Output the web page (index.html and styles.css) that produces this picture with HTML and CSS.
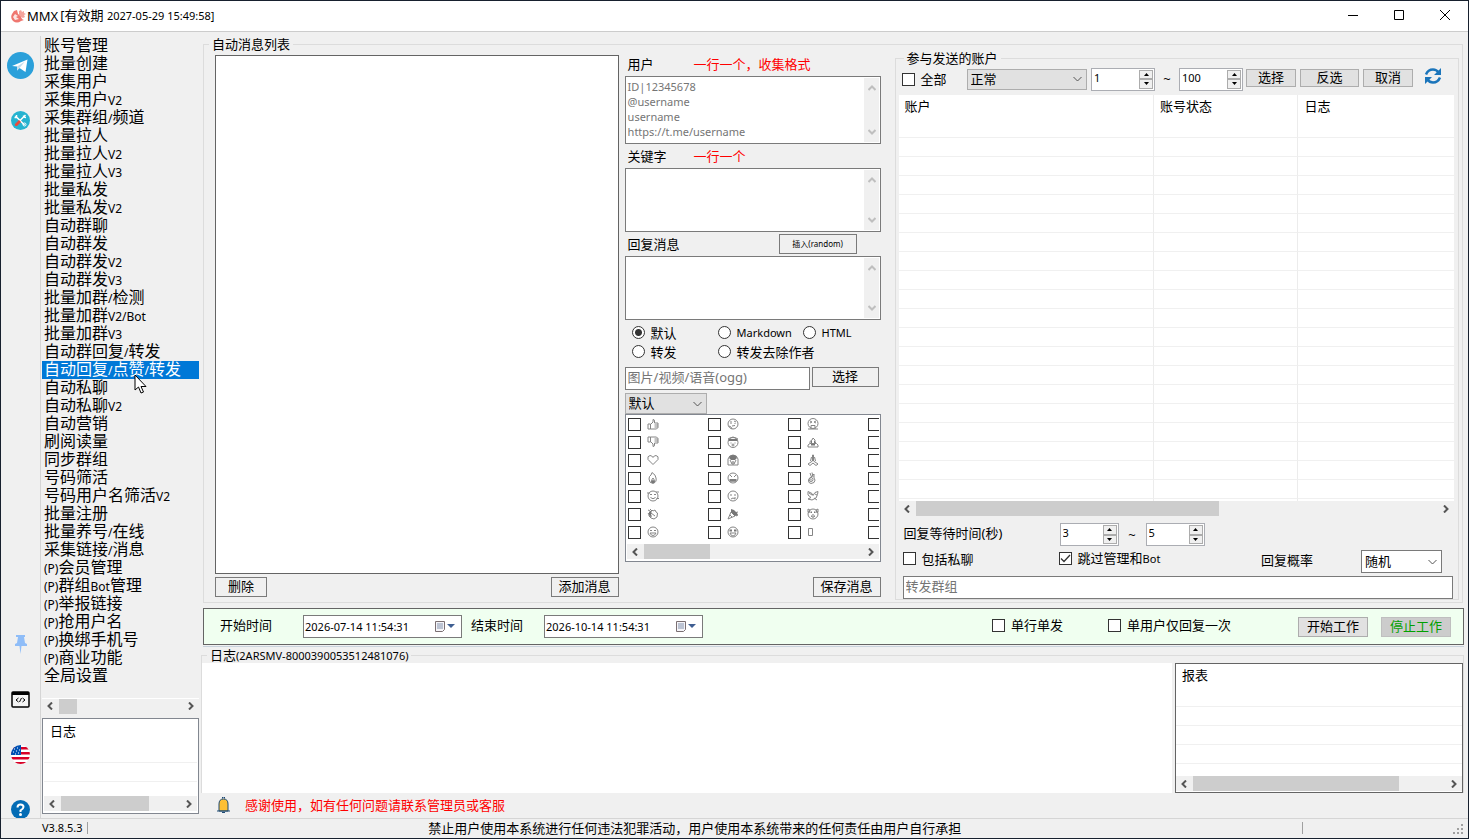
FILE: index.html
```html
<!DOCTYPE html>
<html lang="zh-CN">
<head>
    <meta charset="UTF-8">
    <meta name="viewport" content="width=device-width, initial-scale=1.0">
    <title>MMX</title>
    <link rel="stylesheet" href="styles.css">
</head>
<body>
    <svg class="sprite" aria-hidden="true">
        <symbol id="left" viewBox="0 0 8 8"><path d="M6 .5L2.500 4L6 7.500"/></symbol>
        <symbol id="right" viewBox="0 0 8 8"><path d="M2 .5L5.500 4L2 7.500"/></symbol>
        <symbol id="up" viewBox="0 0 8 8"><path d="M.5 6L4 2.500L7.500 6"/></symbol>
        <symbol id="down" viewBox="0 0 8 8"><path d="M.5 2L4 5.500L7.500 2"/></symbol>
        <symbol id="calendar" viewBox="0 0 21 13">
            <path d="M1.500 1.500h9v8l-2 2h-7z" fill="#f4f4f8" stroke="#7a6f72"/>
            <path d="M3 4h6M3 6h6M3 8h6M4 3v6M6 3v6M8 3v6" stroke="#a9b3c6" fill="none"/>
            <path d="M13 4h8l-4 4z" fill="#3f5f92"/>
        </symbol>
        <symbol id="like" viewBox="0 0 12 12"><path d="M1 6h2.500v5H1zM3.500 6.500L6 4V1.500q1.500 0 1.500 1.500v2H11v4.500L9.500 11h-6M7.500 7H11M7.500 9H11"/></symbol>
        <symbol id="dislike" viewBox="0 0 12 12"><path d="M1 6h2.500V1H1zM3.500 5.500L6 8v2.500q1.500 0 1.500-1.500V7H11V2.500L9.500 1h-6M7.500 5H11M7.500 3H11"/></symbol>
        <symbol id="heart" viewBox="0 0 12 12"><path d="M6 10.500L1 5.500Q0 2 3 1.500Q5 1.500 6 3.500Q7 1.500 9 1.500Q12 2 11 5.500z"/></symbol>
        <symbol id="fire" viewBox="0 0 12 12"><path d="M5 .5Q9 3 9 6Q10 10 6 11.500Q2 11 2 7Q2 4 4 3zM6 6Q4 8 4.500 10.500h3Q8 8 6 6z"/><circle cx="6" cy="9.500" r="1.500" class="dark"/></symbol>
        <symbol id="love" viewBox="0 0 12 12"><circle cx="6" cy="6" r="5"/><path d="M0 3h3M9 2h3M3 5l1-1 1 1M7 5l1-1 1 1M3.500 7.500Q6 10 8.500 7.500M9.500 8.500h2.500"/></symbol>
        <symbol id="clap" viewBox="0 0 12 12"><path d="M2 5L5 2l1 1 2-1 1 2 1.500 1-.5 4-3 2-3-1L2 8zM4 5l4 3M1 2l2 1M3 1l1 1M1 5L4 9"/><path d="M2 4l3-2-1 4 1 3-3-2z" class="dark"/></symbol>
        <symbol id="grin" viewBox="0 0 12 12"><circle cx="6" cy="6" r="5"/><path d="M3 5l1-1 1 1M7 5l1-1 1 1M3 7h6Q8 9.500 6 9.500Q4 9.500 3 7z"/></symbol>
        <symbol id="think" viewBox="0 0 12 12"><circle cx="6" cy="6" r="5"/><path d="M3 4h2M7 3l2 1M4 5v1M8 5v1M5 8l3-.5M2 8l2 1 1 2"/></symbol>
        <symbol id="blown" viewBox="0 0 12 12"><circle cx="6" cy="6.500" r="5"/><path d="M1 3l2-1 3-1 3 1 2 1M4 6.500v1M8 6.500v1"/><path d="M1.500 3h9v2h-9z" class="dark"/><circle cx="6" cy="9" r="1"/></symbol>
        <symbol id="scream" viewBox="0 0 12 12"><path d="M1 11V5Q2 1 6 1Q10 1 11 5v6zM3 6l2 4M9 6l-2 4"/><path d="M2 4Q3 1 6 1Q9 1 10 4L8 6H4z" class="dark"/><ellipse cx="6" cy="9" rx="1" ry="1.500"/></symbol>
        <symbol id="curse" viewBox="0 0 12 12"><circle cx="6" cy="6" r="5"/><path d="M3 3l2 2M9 3L7 5"/><path d="M2.500 7h7v2.500h-7z" class="dark"/><path d="M4 7v3M6 7v3M8 7v3"/></symbol>
        <symbol id="cry" viewBox="0 0 12 12"><circle cx="6" cy="6" r="5"/><path d="M4 4v2M8 4v2M4 9q2-2 4 0M8 7v2"/></symbol>
        <symbol id="party" viewBox="0 0 12 12"><path d="M1 11l3-7 4 4zM3 7l2 2M7 5l4-1M9 8l2-1"/><path d="M4 1l3 1 3 3 1 2-3 1-4-4z" class="dark"/></symbol>
        <symbol id="star" viewBox="0 0 12 12"><circle cx="6" cy="6" r="5"/><path d="M3 7h6Q8 10 6 10Q4 10 3 7z"/><path d="M2.500 3.500h2.500v2H2.500zM7 3.500h2.500v2H7z" class="dark"/></symbol>
        <symbol id="vomit" viewBox="0 0 12 12"><circle cx="6" cy="5.500" r="5"/><path d="M3 3l2 1-2 1M9 3L7 4l2 1M4 11V7.500h4V11M1 11h10"/></symbol>
        <symbol id="poo" viewBox="0 0 12 12"><path d="M1 11V9l2-1.500V5.500L5 4l1-2 2 2v2l1.500 1.500L11 9v2zM3 7.500h6"/><path d="M4 5h1v2H4zM7 5h1v2H7zM4 8h4v1.500H4z" class="dark"/></symbol>
        <symbol id="pray" viewBox="0 0 12 12"><path d="M5.500 1v6L1 10l2 1.500L6 9l3 2.500L11 10 6.500 7V1zM4.500 3L3.500 7M7.500 3l1 4"/></symbol>
        <symbol id="ok" viewBox="0 0 12 12"><path d="M3 1l1.500 4M5 .5L6 5M7 2v4q2 2 0 4.500L4 11.500Q1 11 1.500 8z"/><circle cx="4" cy="7.500" r="2"/><path d="M3.500 7h1v1.500h-1z" class="dark"/></symbol>
        <symbol id="dove" viewBox="0 0 12 12"><path d="M1 1.500l4 2 1 2 2-3 3-1-.5 3L9 8l-4 2-4-1 3-1.500L1 5zM2 3l3 2M8 4l2 1M7 8l3 2"/></symbol>
        <symbol id="clown" viewBox="0 0 12 12"><circle cx="6" cy="6" r="5"/><path d="M1 1l2 1-1 3-1-1zM11 1L9 2l1 3 1-1zM4 8q2 3 4 0z"/><path d="M3.500 3.500h1.500v1.500H3.500zM7 3.500h1.500v1.500H7zM5.500 6h1v1h-1z" class="dark"/></symbol>
        <symbol id="tofu" viewBox="0 0 12 12"><path d="M1.500 2.500h4v7h-4z"/></symbol>
    </svg>

    <div class="window">
        <header class="titlebar">
            <svg class="logo" viewBox="0 0 16 14">
                <path d="M2 5Q0 9 3 12Q7 15 11 12L14 11Q11 10 11 7L8 5 7 1 4 2z" fill="#ef7770"/>
                <path d="M9 2l2-1 1 2 2-1v2l2 1-2 1 1 2-2 1-2-1-2-2z" fill="#f3a49c"/>
                <path d="M5 5l3 2-2 1 3 2-4 1-2-3z" fill="#fbe6e3"/>
            </svg>
            <h1 class="title">MMX</h1>
            <span class="expiry">[有效期 <small>2027-05-29 15:49:58]</small></span>
            <div class="window-buttons">
                <button aria-label="最小化"><svg viewBox="0 0 12 12"><path d="M1 6.500h10"/></svg></button>
                <button aria-label="最大化"><svg viewBox="0 0 12 12"><path d="M1.500 1.500h9v9h-9z"/></svg></button>
                <button aria-label="关闭"><svg viewBox="0 0 12 12"><path d="M1 1l10 10M11 1L1 11"/></svg></button>
            </div>
        </header>

        <div class="main">
            <nav class="rail">
                <a href="#" aria-label="Telegram"><svg class="icon-large" viewBox="0 0 27 27">
                    <circle cx="13.500" cy="13.500" r="13.500" fill="#2ba0da"/>
                    <path d="M5 14L20.500 7.500l-2 12.500-6-4-2.500 2.500v-4z" fill="#fff"/>
                    <path d="M10 14.500l8-5-5.500 6.500-2.500 2.500z" fill="#c3dcec"/>
                </svg></a>
                <a class="rail-tools" href="#" aria-label="工具"><svg class="icon" viewBox="0 0 19 19">
                    <circle cx="9.500" cy="9.500" r="9.500" fill="#26b3d0"/>
                    <path d="M4.500 5l9 9M5.500 4v2.500H3.500" stroke="#fff" fill="none" stroke-width="1.500"/>
                    <path d="M14.500 4L9 9.500M12.500 4.500q0 2 2.500 2" stroke="#fff" fill="none" stroke-width="1.500"/>
                    <path d="M4 13l4-4 2 2-4 4q-3 0-2-2z" fill="#e94b3c"/>
                    <circle cx="13.500" cy="13.500" r="1.500" stroke="#fff" fill="none"/>
                </svg></a>
                <a class="rail-bottom" href="#" aria-label="置顶"><svg class="icon" viewBox="0 0 19 19">
                    <path d="M5 0h9v2h-1l1 6 2 1v2h-5.500L9.500 19 8.500 11H4V9l2-1 1-6H5z" fill="#8fbdf8"/>
                </svg></a>
                <a href="#" aria-label="控制台"><svg class="icon" viewBox="0 0 19 19">
                    <rect x="1" y="2" width="17" height="15" rx="1" fill="#f4f4f4" stroke="#000" stroke-width="1.500"/>
                    <path d="M1 2h17v3H1z"/>
                    <path d="M7.500 8L5 10l2.500 2M11.500 8l2.500 2-2.500 2M10.500 8l-2 4" stroke="#000" fill="none"/>
                </svg></a>
                <a href="#" aria-label="语言"><svg class="icon" viewBox="0 0 19 19">
                    <clipPath id="round"><circle cx="9.500" cy="9.500" r="9.500"/></clipPath>
                    <g clip-path="url(#round)">
                        <path d="M0 0h19v19H0z" fill="#fff"/>
                        <path d="M0 2h19v2.500H0zM0 7h19v2.500H0zM0 12h19v2.500H0zM0 17h19v2H0z" fill="#d80027"/>
                        <path d="M0 0h10v10H0z" fill="#0052b4"/>
                        <path d="M3 4h1M6 3h1M2 7h1M5 6h1M8 5h1M4 9h1M7 8h1" stroke="#fff"/>
                    </g>
                </svg></a>
                <a href="#" aria-label="帮助"><svg class="icon" viewBox="0 0 19 19">
                    <circle cx="9.500" cy="9.500" r="9.500" fill="#036cb5"/>
                    <path d="M6.500 7.500Q6.500 4.500 9.500 4.500Q12.500 4.500 12.500 7Q12.500 8.500 9.500 10.500V12" stroke="#fff" stroke-width="2" fill="none"/>
                    <circle cx="9.500" cy="14.500" r="1.500" fill="#fff"/>
                </svg></a>
            </nav>

            <aside class="sidebar">
                <ul class="menu">
                    <li><a href="#">账号管理</a></li>
                    <li><a href="#">批量创建</a></li>
                    <li><a href="#">采集用户</a></li>
                    <li><a href="#">采集用户<small>V2</small></a></li>
                    <li><a href="#">采集群组<small>/</small>频道</a></li>
                    <li><a href="#">批量拉人</a></li>
                    <li><a href="#">批量拉人<small>V2</small></a></li>
                    <li><a href="#">批量拉人<small>V3</small></a></li>
                    <li><a href="#">批量私发</a></li>
                    <li><a href="#">批量私发<small>V2</small></a></li>
                    <li><a href="#">自动群聊</a></li>
                    <li><a href="#">自动群发</a></li>
                    <li><a href="#">自动群发<small>V2</small></a></li>
                    <li><a href="#">自动群发<small>V3</small></a></li>
                    <li><a href="#">批量加群<small>/</small>检测</a></li>
                    <li><a href="#">批量加群<small>V2/Bot</small></a></li>
                    <li><a href="#">批量加群<small>V3</small></a></li>
                    <li><a href="#">自动群回复<small>/</small>转发</a></li>
                    <li class="active">
                        <a href="#">自动回复<small>/</small>点赞<small>/</small>转发</a>
                        <svg class="cursor" viewBox="0 0 13 20"><path d="M1 1v15l3.500-3 2.500 6 2.500-1-2.500-5.500h5z" fill="#fff" stroke="#000"/></svg>
                    </li>
                    <li><a href="#">自动私聊</a></li>
                    <li><a href="#">自动私聊<small>V2</small></a></li>
                    <li><a href="#">自动营销</a></li>
                    <li><a href="#">刷阅读量</a></li>
                    <li><a href="#">同步群组</a></li>
                    <li><a href="#">号码筛活</a></li>
                    <li><a href="#">号码用户名筛活<small>V2</small></a></li>
                    <li><a href="#">批量注册</a></li>
                    <li><a href="#">批量养号<small>/</small>在线</a></li>
                    <li><a href="#">采集链接<small>/</small>消息</a></li>
                    <li><a href="#"><small>(P)</small>会员管理</a></li>
                    <li><a href="#"><small>(P)</small>群组<small>Bot</small>管理</a></li>
                    <li><a href="#"><small>(P)</small>举报链接</a></li>
                    <li><a href="#"><small>(P)</small>抢用户名</a></li>
                    <li><a href="#"><small>(P)</small>换绑手机号</a></li>
                    <li><a href="#"><small>(P)</small>商业功能</a></li>
                    <li><a href="#">全局设置</a></li>
                </ul>
                <div class="hscroll menu-scroll">
                    <svg><use href="#left"/></svg>
                    <div class="track"><div class="thumb thumb-menu"></div></div>
                    <svg><use href="#right"/></svg>
                </div>
                <div class="list-box side-log">
                    <div class="list-view">
                        <table class="grid">
                            <thead><tr><th>日志</th></tr></thead>
                            <tbody><tr><td></td></tr><tr><td></td></tr><tr><td></td></tr></tbody>
                        </table>
                    </div>
                    <div class="hscroll">
                        <svg><use href="#left"/></svg>
                        <div class="track"><div class="thumb thumb-log"></div></div>
                        <svg><use href="#right"/></svg>
                    </div>
                </div>
            </aside>

            <main class="content">
                <fieldset class="group messages">
                    <legend>自动消息列表</legend>
                    <div class="message-list">
                        <div class="message-box"></div>
                        <div class="row spread">
                            <button class="btn">删除</button>
                            <button class="btn">添加消息</button>
                        </div>
                    </div>

                    <div class="editor">
                        <div class="field-head">
                            <label for="users">用户</label>
                            <span class="hint">一行一个，收集格式</span>
                        </div>
                        <div class="text-box">
                            <textarea id="users" class="tall" placeholder="ID|12345678&#10;@username&#10;username&#10;https://t.me/username"></textarea>
                            <div class="vscroll"><svg><use href="#up"/></svg><svg><use href="#down"/></svg></div>
                        </div>
                        <div class="field-head">
                            <label for="keywords">关键字</label>
                            <span class="hint">一行一个</span>
                        </div>
                        <div class="text-box">
                            <textarea id="keywords"></textarea>
                            <div class="vscroll"><svg><use href="#up"/></svg><svg><use href="#down"/></svg></div>
                        </div>
                        <div class="field-head">
                            <label for="reply">回复消息</label>
                            <button class="btn btn-insert">插入(random)</button>
                        </div>
                        <div class="text-box">
                            <textarea id="reply"></textarea>
                            <div class="vscroll"><svg><use href="#up"/></svg><svg><use href="#down"/></svg></div>
                        </div>
                        <div class="modes">
                            <label><input type="radio" name="mode" checked>默认</label>
                            <label><input type="radio" name="mode"><small>Markdown</small></label>
                            <label><input type="radio" name="mode"><small>HTML</small></label>
                            <label><input type="radio" name="mode">转发</label>
                            <label class="wide"><input type="radio" name="mode">转发去除作者</label>
                        </div>
                        <div class="row file-row">
                            <input class="text-input" type="text" placeholder="图片/视频/语音(ogg)" aria-label="图片/视频/语音">
                            <button class="btn">选择</button>
                        </div>
                        <select class="combo reaction-type" aria-label="表情"><option>默认</option></select>
                        <div class="list-box reactions">
                            <div class="reaction-grid">
                                <label><input type="checkbox"><svg><use href="#like"/></svg></label>
                                <label><input type="checkbox"><svg><use href="#dislike"/></svg></label>
                                <label><input type="checkbox"><svg><use href="#heart"/></svg></label>
                                <label><input type="checkbox"><svg><use href="#fire"/></svg></label>
                                <label><input type="checkbox"><svg><use href="#love"/></svg></label>
                                <label><input type="checkbox"><svg><use href="#clap"/></svg></label>
                                <label><input type="checkbox"><svg><use href="#grin"/></svg></label>
                                <label><input type="checkbox"><svg><use href="#think"/></svg></label>
                                <label><input type="checkbox"><svg><use href="#blown"/></svg></label>
                                <label><input type="checkbox"><svg><use href="#scream"/></svg></label>
                                <label><input type="checkbox"><svg><use href="#curse"/></svg></label>
                                <label><input type="checkbox"><svg><use href="#cry"/></svg></label>
                                <label><input type="checkbox"><svg><use href="#party"/></svg></label>
                                <label><input type="checkbox"><svg><use href="#star"/></svg></label>
                                <label><input type="checkbox"><svg><use href="#vomit"/></svg></label>
                                <label><input type="checkbox"><svg><use href="#poo"/></svg></label>
                                <label><input type="checkbox"><svg><use href="#pray"/></svg></label>
                                <label><input type="checkbox"><svg><use href="#ok"/></svg></label>
                                <label><input type="checkbox"><svg><use href="#dove"/></svg></label>
                                <label><input type="checkbox"><svg><use href="#clown"/></svg></label>
                                <label><input type="checkbox"><svg><use href="#tofu"/></svg></label>
                                <label><input type="checkbox"></label>
                                <label><input type="checkbox"></label>
                                <label><input type="checkbox"></label>
                                <label><input type="checkbox"></label>
                                <label><input type="checkbox"></label>
                                <label><input type="checkbox"></label>
                                <label><input type="checkbox"></label>
                            </div>
                            <div class="hscroll">
                                <svg><use href="#left"/></svg>
                                <div class="track"><div class="thumb thumb-reactions"></div></div>
                                <svg><use href="#right"/></svg>
                            </div>
                        </div>
                        <button class="btn save">保存消息</button>
                    </div>

                    <fieldset class="group accounts">
                        <legend>参与发送的账户</legend>
                        <div class="row account-tools">
                            <label class="check all"><input type="checkbox">全部</label>
                            <select class="combo status" aria-label="状态"><option>正常</option></select>
                            <span class="spin">
                                <input type="text" value="1" aria-label="起始">
                                <span><button aria-label="加"></button><button aria-label="减"></button></span>
                            </span>
                            <span class="tilde">~</span>
                            <span class="spin">
                                <input type="text" value="100" aria-label="结束">
                                <span><button aria-label="加"></button><button aria-label="减"></button></span>
                            </span>
                            <div class="row picks">
                                <button class="btn btn-gray">选择</button>
                                <button class="btn btn-gray btn-wide">反选</button>
                                <button class="btn btn-gray">取消</button>
                            </div>
                            <button class="refresh" aria-label="刷新"><svg viewBox="0 0 18 18">
                                <path d="M2 7.500Q4 2.500 9 2.500Q12.500 2.500 14.500 5.500M16 10.500Q14 15.500 9 15.500Q5.500 15.500 3.500 12.500" fill="none" stroke="#1b75bb" stroke-width="2.500"/>
                                <path d="M17 1v7h-7zM1 17v-7h7z" fill="#1b75bb"/>
                            </svg></button>
                        </div>
                        <div class="list-view account-list">
                            <table class="grid">
                                <thead><tr><th class="col-account">账户</th><th class="col-status">账号状态</th><th>日志</th></tr></thead>
                                <tbody>
                                    <tr><td></td><td></td><td></td></tr>
                                    <tr><td></td><td></td><td></td></tr>
                                    <tr><td></td><td></td><td></td></tr>
                                    <tr><td></td><td></td><td></td></tr>
                                    <tr><td></td><td></td><td></td></tr>
                                    <tr><td></td><td></td><td></td></tr>
                                    <tr><td></td><td></td><td></td></tr>
                                    <tr><td></td><td></td><td></td></tr>
                                    <tr><td></td><td></td><td></td></tr>
                                    <tr><td></td><td></td><td></td></tr>
                                    <tr><td></td><td></td><td></td></tr>
                                    <tr><td></td><td></td><td></td></tr>
                                    <tr><td></td><td></td><td></td></tr>
                                    <tr><td></td><td></td><td></td></tr>
                                    <tr><td></td><td></td><td></td></tr>
                                    <tr><td></td><td></td><td></td></tr>
                                    <tr><td></td><td></td><td></td></tr>
                                    <tr><td></td><td></td><td></td></tr>
                                    <tr><td></td><td></td><td></td></tr>
                                    <tr><td></td><td></td><td></td></tr>
                                    <tr><td></td><td></td><td></td></tr>
                                </tbody>
                            </table>
                        </div>
                        <div class="hscroll">
                            <svg><use href="#left"/></svg>
                            <div class="track"><div class="thumb thumb-accounts"></div></div>
                            <svg><use href="#right"/></svg>
                        </div>
                        <div class="row wait-row">
                            <label class="wait-label" for="wait-min">回复等待时间(秒)</label>
                            <span class="spin spin-small">
                                <input id="wait-min" type="text" value="3">
                                <span><button aria-label="加"></button><button aria-label="减"></button></span>
                            </span>
                            <span class="tilde">~</span>
                            <span class="spin spin-small">
                                <input type="text" value="5" aria-label="最长等待">
                                <span><button aria-label="加"></button><button aria-label="减"></button></span>
                            </span>
                        </div>
                        <div class="row option-row">
                            <label class="check private"><input type="checkbox">包括私聊</label>
                            <label class="check"><input type="checkbox" checked><span>跳过管理和<small>Bot</small></span></label>
                            <label class="rate" for="rate">回复概率</label>
                            <select id="rate" class="combo combo-white"><option>随机</option></select>
                        </div>
                        <input class="text-input forward" type="text" placeholder="转发群组" aria-label="转发群组">
                    </fieldset>
                </fieldset>

                <section class="schedule">
                    <label for="start">开始时间</label>
                    <span class="date-box">
                        <input id="start" type="text" value="2026-07-14 11:54:31">
                        <button aria-label="选择日期"><svg><use href="#calendar"/></svg></button>
                    </span>
                    <label class="end-label" for="end">结束时间</label>
                    <span class="date-box">
                        <input id="end" type="text" value="2026-10-14 11:54:31">
                        <button aria-label="选择日期"><svg><use href="#calendar"/></svg></button>
                    </span>
                    <label class="check single"><input type="checkbox">单行单发</label>
                    <label class="check once"><input type="checkbox">单用户仅回复一次</label>
                    <button class="btn btn-gray btn-work">开始工作</button>
                    <button class="btn btn-gray btn-work btn-stop">停止工作</button>
                </section>

                <fieldset class="group logs">
                    <legend>日志<small>(2ARSMV-8000390053512481076)</small></legend>
                    <textarea class="log-text" aria-label="日志"></textarea>
                    <div class="list-box report">
                        <div class="list-view">
                            <table class="grid">
                                <thead><tr><th>报表</th></tr></thead>
                                <tbody><tr><td></td></tr><tr><td></td></tr><tr><td></td></tr><tr><td></td></tr><tr><td></td></tr></tbody>
                            </table>
                        </div>
                        <div class="hscroll">
                            <svg><use href="#left"/></svg>
                            <div class="track"><div class="thumb thumb-report"></div></div>
                            <svg><use href="#right"/></svg>
                        </div>
                    </div>
                </fieldset>

                <div class="notice">
                    <svg viewBox="0 0 13 17">
                        <path d="M2 14V7Q2 2 6.500 2Q11 2 11 7v7z" fill="#fdbf35" stroke="#1e4a73"/>
                        <path d="M0 14h13M5.500 1.500V0h2v1.500M5 15.500h3" stroke="#1e4a73" fill="none"/>
                    </svg>
                    <span>感谢使用，如有任何问题请联系管理员或客服</span>
                </div>
            </main>
        </div>

        <footer class="statusbar">
            <small class="version">V3.8.5.3</small>
            <span class="disclaimer">禁止用户使用本系统进行任何违法犯罪活动，用户使用本系统带来的任何责任由用户自行承担</span>
            <svg class="grip" viewBox="0 0 11 11"><path d="M8 0h2v2H8zM4 4h2v2H4zM8 4h2v2H8zM0 8h2v2H0zM4 8h2v2H4zM8 8h2v2H8z"/></svg>
        </footer>
    </div>
</body>
</html>
```
FILE: styles.css
```css
:root {
    --face: #f0f0f0;
    --line: #dcdcdc;
    --edge: #7a7a7a;
    --dark-edge: #646464;
    --thumb: #cdcdcd;
    --highlight: #0078d7;
}

* {
    box-sizing: border-box;
}

body {
    margin: 0;
    font-family: "Noto Sans", "Noto Sans CJK SC", sans-serif;
    font-size: 13px;
    line-height: 16px;
    color: #000;
}

button, input, select, textarea {
    font: inherit;
    color: inherit;
    margin: 0;
}

button {
    padding: 0;
    border: none;
    background: none;
}

a {
    color: inherit;
    text-decoration: none;
}

small {
    font-size: 11px;
}

.sprite {
    position: absolute;
    width: 0;
    height: 0;
}

.row {
    display: flex;
}

.spread {
    justify-content: space-between;
}

/* window frame */

.window {
    height: 100vh;
    display: flex;
    flex-direction: column;
    background: var(--face);
    border: 1px solid #17202e;
    overflow: hidden;
}

.titlebar {
    height: 31px;
    flex: none;
    display: flex;
    align-items: center;
    padding-left: 9px;
    background: #fff;
    border-bottom: 1px solid #ccc;
}

.logo {
    width: 16px;
    height: 14px;
}

.title {
    margin: 0 2px 0 1px;
    font-size: 13px;
    font-weight: 400;
}

.expiry {
    padding-bottom: 2px;
}

.window-buttons {
    display: flex;
    align-self: stretch;
    margin-left: auto;
}

.window-buttons button {
    width: 46px;
}

.window-buttons svg {
    width: 12px;
    height: 12px;
    fill: none;
    stroke: #000;
}

.main {
    flex: 1;
    min-height: 0;
    display: flex;
}

/* left rail */

.rail {
    width: 40px;
    flex: none;
    display: flex;
    flex-direction: column;
    align-items: center;
    margin: 4px 0 -1px;
    padding-top: 16px;
    gap: 36px;
    border-right: 1px solid #d5d5d5;
}

.rail a {
    display: flex;
}

.rail-tools {
    margin-top: -4px;
}

.rail-bottom {
    margin-top: auto;
}

.icon {
    width: 19px;
    height: 19px;
}

.icon-large {
    width: 27px;
    height: 27px;
}

/* menu */

.sidebar {
    width: 157px;
    flex: none;
    display: flex;
    flex-direction: column;
    margin-left: 1px;
    padding: 5px 0 4px;
}

.menu {
    flex: 1;
    min-height: 0;
    margin: 0;
    padding: 0;
    list-style: none;
    font-size: 16px;
}

.menu li {
    height: 18px;
    padding-left: 2px;
    white-space: nowrap;
    position: relative;
}

.menu a {
    display: block;
    line-height: 16px;
}

.menu small {
    font-size: 12px;
}

.menu .active {
    background: var(--highlight);
    color: #fff;
}

.cursor {
    position: absolute;
    left: 92px;
    top: 13px;
    width: 13px;
    height: 20px;
    z-index: 1;
}

.menu-scroll {
    margin-bottom: 5px;
    border-top: 1px solid #fff;
}

/* scrollbars */

.hscroll {
    height: 15px;
    flex: none;
    display: flex;
    align-items: center;
    background: var(--face);
}

.hscroll svg,
.vscroll svg {
    width: 8px;
    height: 8px;
    margin: 0 4px;
    flex: none;
    fill: none;
    stroke: #555;
    stroke-width: 2;
}

.track {
    flex: 1;
    height: 15px;
}

.thumb {
    height: 15px;
    margin-left: 1px;
    background: var(--thumb);
}

.thumb-menu {
    width: 14%;
}

.thumb-log {
    width: 73%;
}

.thumb-reactions {
    width: 30%;
}

.thumb-accounts {
    width: 58%;
}

.thumb-report {
    width: 81%;
}

.vscroll {
    width: 15px;
    display: flex;
    flex-direction: column;
    justify-content: space-between;
    padding: 6px 0;
    background: var(--face);
}

.vscroll svg {
    stroke: #bfbfbf;
}

/* list views */

.list-box {
    display: flex;
    flex-direction: column;
    padding: 1px;
    background: #fff;
    border: 1px solid #828790;
}

.list-view {
    flex: 1;
    min-height: 0;
    overflow: hidden;
    background: #fff;
}

.grid {
    width: 100%;
    table-layout: fixed;
    border-collapse: separate;
    border-spacing: 0;
}

.grid th {
    height: 24px;
    padding: 0 6px 2px;
    text-align: left;
    font-weight: 400;
}

.grid td {
    height: 19px;
    padding: 0;
    border-bottom: 1px solid #f0f0f0;
}

.grid th:not(:last-child),
.grid td:not(:last-child) {
    border-right: 1px solid #ececec;
}

.side-log {
    height: 96px;
    flex: none;
    padding-bottom: 2px;
}

/* content */

.content {
    flex: 1;
    min-width: 0;
    display: flex;
    flex-direction: column;
    padding: 4px 4px 0 2px;
}

.group {
    min-width: 0;
    margin: 0;
    padding: 0;
    border: 1px solid var(--line);
}

.group legend {
    height: 16px;
    margin-left: 5px;
    padding: 0 3px;
}

.messages {
    flex: 1;
    min-height: 0;
    display: flex;
    margin: 0 1px 5px 2px;
    padding: 0 3px 5px 11px;
}

.messages > legend {
    margin-left: -6px;
}

.message-list {
    flex: 404;
    display: flex;
    flex-direction: column;
    gap: 3px;
    padding-top: 3px;
    margin-right: 6px;
}

.message-box {
    flex: 1;
    background: #fff;
    border: 1px solid var(--dark-edge);
}

.btn {
    height: 20px;
    min-width: 52px;
    padding: 0 7px 2px;
    line-height: 16px;
    background: var(--face);
    border: 1px solid var(--edge);
    white-space: nowrap;
}

.btn-gray {
    height: 18px;
    min-width: 50px;
    line-height: 14px;
    background: #e1e1e1;
    border-color: #adadad;
}

.btn-wide {
    width: 59px;
}

/* message editor */

.editor {
    width: 256px;
    flex: none;
    display: flex;
    flex-direction: column;
    margin-right: 14px;
}

.field-head {
    height: 24px;
    display: flex;
    align-items: center;
    padding: 0 24px 0 3px;
}

.field-head label {
    width: 66px;
    padding-bottom: 1px;
}

.hint,
.notice {
    color: #f00;
}

.btn-insert {
    width: 78px;
    margin-left: auto;
    padding-bottom: 0;
    font-size: 8px;
}

.text-box {
    display: flex;
    padding: 1px;
    background: #fff;
    border: 1px solid var(--edge);
}

.text-box textarea {
    flex: 1;
    min-width: 0;
    height: 60px;
    padding: 1px;
    border: none;
    resize: none;
    overflow: hidden;
    font-size: 11px;
    line-height: 15px;
}

.text-box .tall {
    height: 64px;
}

::placeholder {
    color: #757575;
    opacity: 1;
}

input[type="radio"],
input[type="checkbox"] {
    appearance: none;
    width: 13px;
    height: 13px;
    flex: none;
    margin: 0 6px 0 0;
    background: #fff;
    border: 1px solid #333;
}

input[type="radio"] {
    border-radius: 50%;
}

input[type="radio"]:checked {
    background: radial-gradient(circle, #333 3px, #fff 4px);
}

input[type="checkbox"]:checked {
    background: #fff url("data:image/svg+xml,%3Csvg xmlns='http://www.w3.org/2000/svg' viewBox='0 0 11 11'%3E%3Cpath d='M1 5.500l3 3L10 2' fill='none' stroke='%23333' stroke-width='1.300'/%3E%3C/svg%3E");
}

.modes {
    display: grid;
    grid-template-columns: 86px 85px 1fr;
    grid-auto-rows: 19px;
    padding: 3px 0 6px 7px;
}

.modes label,
.check {
    display: flex;
    align-items: center;
    white-space: nowrap;
}

.wide {
    grid-column: span 2;
}

.file-row {
    gap: 2px;
}

.file-row .text-input {
    width: 185px;
}

.file-row .btn {
    width: 67px;
}

.text-input {
    height: 23px;
    padding: 0 2px 3px;
    background: #fff;
    border: 1px solid var(--edge);
}

.combo {
    appearance: none;
    height: 21px;
    padding: 0 3px;
    line-height: 17px;
    border: 1px solid #adadad;
    border-radius: 0;
    background: #e1e1e1 url("data:image/svg+xml,%3Csvg xmlns='http://www.w3.org/2000/svg' width='9' height='6' viewBox='0 0 9 6'%3E%3Cpath d='M.5 1l4 4 4-4' fill='none' stroke='%23555'/%3E%3C/svg%3E") no-repeat right 4px center;
}

.combo-white {
    width: 81px;
    height: 23px;
    background-color: #fff;
    border-color: var(--edge);
}

.reaction-type {
    width: 82px;
    margin-top: 3px;
}

.reactions {
    height: 148px;
    padding: 0 1px 2px;
}

.reaction-grid {
    flex: 1;
    display: grid;
    grid-auto-flow: column;
    grid-template-rows: repeat(7, 18px);
    grid-auto-columns: 80px;
    padding-left: 1px;
    overflow: hidden;
}

.reaction-grid label {
    display: flex;
    align-items: center;
}

.reaction-grid svg {
    width: 12px;
    height: 12px;
    fill: none;
    stroke: #858585;
    stroke-width: 1;
}

.dark {
    fill: #777;
    stroke: none;
}

.save {
    margin-top: auto;
    align-self: flex-end;
}

/* accounts */

.accounts {
    flex: 556;
    display: flex;
    flex-direction: column;
    margin: -2px 0 -3px;
    padding: 0 4px 0 3px;
}

.account-tools {
    height: 29px;
    flex: none;
    align-items: center;
    padding: 0 12px 3px 3px;
}

.all {
    margin-right: 20px;
}

.status {
    width: 121px;
    margin-right: 4px;
}

.spin {
    width: 64px;
    height: 23px;
    display: flex;
    padding: 1px;
    background: #fff;
    border: 1px solid #abadb3;
}

.spin input {
    flex: 1;
    min-width: 0;
    padding: 0 1px 3px;
    border: none;
    font-size: 11px;
}

.spin span {
    width: 14px;
    display: flex;
    flex-direction: column;
}

.spin button {
    flex: 1;
    background: var(--face) url("data:image/svg+xml,%3Csvg xmlns='http://www.w3.org/2000/svg' width='5' height='3' viewBox='0 0 5 3'%3E%3Cpath d='M0 3h5L2.500 0z'/%3E%3C/svg%3E") no-repeat center;
    border: 1px solid #acacac;
}

.spin button:last-child {
    background-image: url("data:image/svg+xml,%3Csvg xmlns='http://www.w3.org/2000/svg' width='5' height='3' viewBox='0 0 5 3'%3E%3Cpath d='M0 0h5L2.500 3z'/%3E%3C/svg%3E");
}

.spin-small {
    width: 59px;
}

.tilde {
    width: 24px;
    text-align: center;
}

.picks {
    gap: 4px;
    margin: 0 0 3px 3px;
}

.refresh {
    width: 18px;
    height: 18px;
    margin: 0 0 6px 11px;
}

.refresh svg {
    width: 18px;
    height: 18px;
    display: block;
}

.col-account {
    width: 46%;
}

.col-status {
    width: 26%;
}

.wait-row {
    align-items: center;
    margin-top: 7px;
    padding-left: 5px;
}

.wait-row .tilde {
    width: 27px;
}

.wait-label,
.private {
    width: 156px;
}

.wait-label {
    padding-bottom: 3px;
}

.option-row {
    height: 25px;
    align-items: center;
    margin-top: 3px;
    padding: 0 12px 0 4px;
}

.option-row .check {
    padding-bottom: 6px;
}

.rate {
    margin: 0 48px 0 auto;
    padding-bottom: 3px;
}

.forward {
    margin: 2px 1px 0 4px;
}

/* schedule */

.schedule {
    height: 37px;
    flex: none;
    display: flex;
    align-items: center;
    margin-left: 2px;
    padding: 0 12px 0 16px;
    background: #f0fff0;
    border: 1px solid var(--dark-edge);
    box-shadow: 0 1px var(--face), 0 2px #c8d2dc;
}

.schedule label {
    padding-bottom: 3px;
}

.date-box {
    width: 159px;
    height: 23px;
    display: flex;
    align-items: center;
    margin-left: 31px;
    padding: 0 6px 0 1px;
    background: #fff;
    border: 1px solid var(--edge);
}

.end-label {
    margin-left: 9px;
}

.end-label + .date-box {
    margin-left: 21px;
}

.date-box input {
    flex: 1;
    min-width: 0;
    padding: 0;
    border: none;
    font-size: 11px;
}

.date-box svg {
    width: 21px;
    height: 13px;
    display: block;
}

.single {
    margin-left: auto;
}

.once {
    margin: 0 67px 0 45px;
}

.btn-work {
    width: 70px;
    height: 20px;
}

.btn-stop {
    margin-left: 13px;
    background: #ccc;
    border-color: #bfbfbf;
    color: #00a000;
}

/* logs */

.logs {
    flex: none;
    display: flex;
    margin-top: 2px;
    border-bottom: none;
}

.log-text {
    flex: 1;
    min-width: 0;
    height: 130px;
    padding: 2px;
    border: none;
    resize: none;
    background: #fff;
}

.report {
    width: 288px;
    height: 130px;
    margin-left: 3px;
    padding: 0 0 1px;
    border-color: var(--dark-edge);
}

.notice {
    height: 25px;
    flex: none;
    display: flex;
    align-items: center;
    gap: 15px;
    padding-left: 16px;
}

.notice svg {
    width: 13px;
    height: 17px;
}

.notice span {
    padding-bottom: 2px;
}

.statusbar {
    height: 20px;
    flex: none;
    display: flex;
    align-items: center;
    padding: 0 0 2px 41px;
    border-top: 1px solid #d5d5d5;
}

.version {
    padding-right: 4px;
    border-right: 1px solid #a0a0a0;
    line-height: 12px;
}

.disclaimer {
    flex: 1;
    text-align: center;
    line-height: 12px;
    border-right: 1px solid #a0a0a0;
}

.grip {
    width: 11px;
    height: 11px;
    margin: 4px 4px 0 150px;
    fill: #a0a0a0;
}
```
